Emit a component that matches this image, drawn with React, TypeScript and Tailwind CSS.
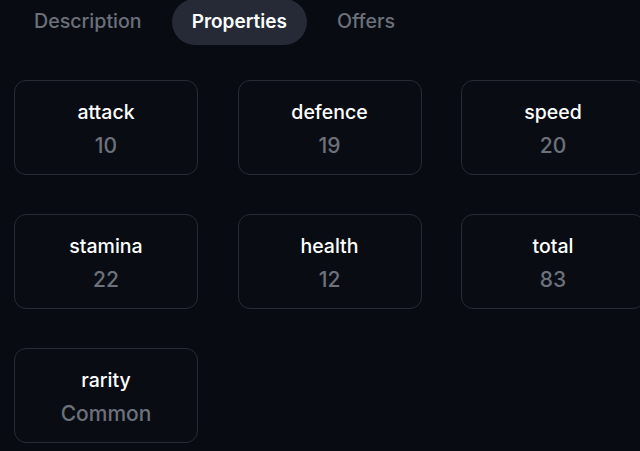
import React from "react";

const tabs = ["Description", "Properties", "Offers"];
const active = "Properties";

const props: { label: string; value: string }[] = [
  { label: "attack", value: "10" },
  { label: "defence", value: "19" },
  { label: "speed", value: "20" },
  { label: "stamina", value: "22" },
  { label: "health", value: "12" },
  { label: "total", value: "83" },
  { label: "rarity", value: "Common" },
];

function PropCard({ label, value }: { label: string; value: string }) {
  return (
    <div className="flex h-[95px] w-[184px] shrink-0 flex-col items-center justify-center rounded-xl border border-[#262b35] bg-[#090d13] pt-[3px]">
      <div className="text-[19.5px] font-medium leading-6 text-white">{label}</div>
      <div className="mt-[10px] text-[21px] font-medium leading-6 text-[#6c717b]">{value}</div>
    </div>
  );
}

export default function App() {
  const rows: (typeof props)[] = [];
  for (let i = 0; i < props.length; i += 3) rows.push(props.slice(i, i + 3));

  return (
    <div
      className="h-[451px] w-[640px] overflow-hidden bg-[#080c12]"
      style={{ fontFamily: "Inter, 'Noto Sans', sans-serif" }}
    >
      <div className="-mt-[1px] flex gap-2.5 pl-[14px]">
        {tabs.map((tab) => (
          <div
            key={tab}
            className={
              tab === active
                ? "flex h-[46px] items-center rounded-full bg-[#252a36] px-5 text-[19px] font-semibold text-white"
                : "flex h-[46px] items-center rounded-full px-5 text-[19.6px] font-medium text-[#6b707a]"
            }
          >
            {tab}
          </div>
        ))}
      </div>

      <div className="mt-[35px] flex flex-col gap-[39px] pl-[14px]">
        {rows.map((row, r) => (
          <div key={r} className="flex gap-[39.5px]">
            {row.map((p) => (
              <PropCard key={p.label} label={p.label} value={p.value} />
            ))}
          </div>
        ))}
      </div>
    </div>
  );
}
